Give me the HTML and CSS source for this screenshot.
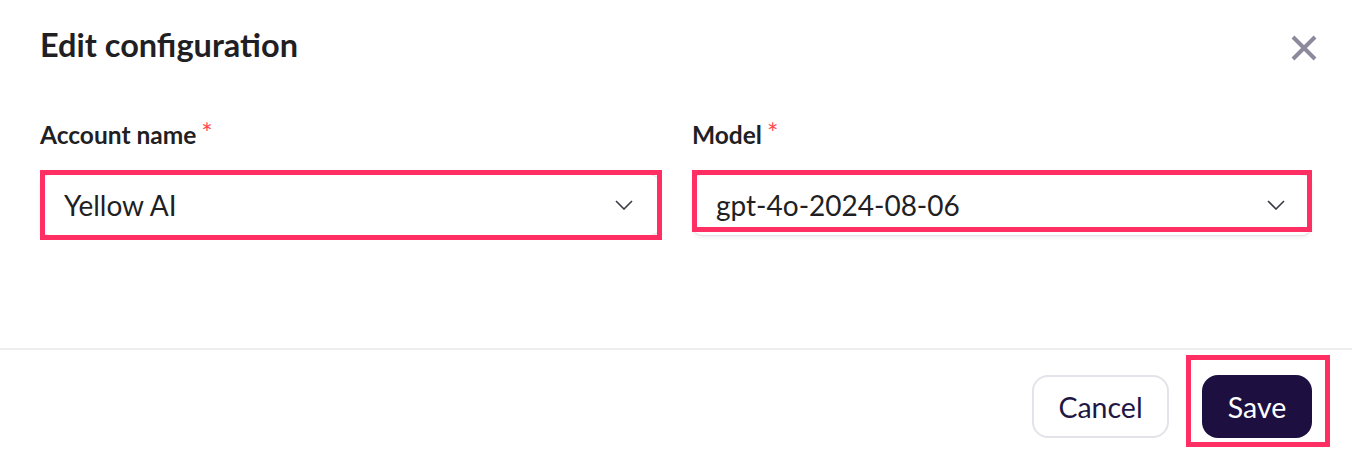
FILE: index.html
```html
<!DOCTYPE html>
<html lang="en">
<head>
<meta charset="utf-8">
<title>Edit configuration</title>
<link rel="stylesheet" href="styles.css">
</head>
<body>
<div class="modal">
  <header class="modal-header">
    <h2 class="modal-title">Edit configuration</h2>
    <button class="close-btn" aria-label="Close">
      <svg width="28" height="28" viewBox="0 0 28 28"><path d="M3 3 L25 25 M25 3 L3 25" stroke="#8c8a9c" stroke-width="4" stroke-linecap="butt" fill="none"/></svg>
    </button>
  </header>
  <div class="modal-body">
    <div class="field">
      <label class="field-label">Account name<span class="req">*</span></label>
      <div class="select annot annot-account">
        <span class="select-value">Yellow AI</span>
        <svg class="chev" width="18" height="10" viewBox="0 0 18 10"><path d="M1 1 L9 9 L17 1" stroke="#3a3a44" stroke-width="1.6" fill="none"/></svg>
      </div>
    </div>
    <div class="field">
      <label class="field-label">Model<span class="req">*</span></label>
      <div class="select annot annot-model">
        <span class="select-value">gpt-4o-2024-08-06</span>
        <svg class="chev" width="18" height="10" viewBox="0 0 18 10"><path d="M1 1 L9 9 L17 1" stroke="#3a3a44" stroke-width="1.6" fill="none"/></svg>
      </div>
    </div>
  </div>
  <footer class="modal-footer">
    <button class="btn btn-cancel">Cancel</button>
    <button class="btn btn-save annot annot-save">Save</button>
  </footer>
</div>
</body>
</html>
```
FILE: styles.css
```css
* { box-sizing: border-box; }
html, body { margin: 0; padding: 0; background: #ffffff; }
body {
  font-family: Lato, "Noto Sans", sans-serif;
  color: #1f1f24;
  width: 1352px;
  height: 454px;
  overflow: hidden;
}
.modal { display: flex; flex-direction: column; }
.modal-header {
  display: flex;
  justify-content: space-between;
  align-items: flex-start;
  padding: 22px 34px 0 40px;
  height: 92px;
}
.modal-title {
  margin: 0;
  font-size: 32.5px;
  font-weight: 700;
  line-height: 46px;
  color: #1f1f24;
}
.close-btn {
  background: none;
  border: 0;
  padding: 0;
  margin-top: 12px;
  width: 28px;
  height: 28px;
  display: flex;
}
.modal-body {
  display: grid;
  grid-template-columns: 1fr 1fr;
  gap: 32px;
  padding: 27px 40px 0 40px;
  height: 256px;
}
.field { display: flex; flex-direction: column; }
.field-label {
  font-size: 24.5px;
  font-weight: 700;
  line-height: 32px;
  color: #1f1f24;
  display: flex;
  align-items: flex-start;
}
.req {
  color: #ff4a4f;
  font-size: 27px;
  line-height: 27px;
  margin-left: 5px;
  font-weight: 400;
}
.select {
  margin-top: 23px;
  height: 62px;
  border: 1px solid #e2e2e8;
  border-radius: 10px;
  box-shadow: 0 2px 4px rgba(0,0,0,0.06);
  display: flex;
  align-items: center;
  justify-content: space-between;
  padding: 0 26px 0 23px;
  background: #fff;
}
.select-value {
  font-size: 28px;
  color: #1f1f24;
}
.chev { display: block; }
.modal-footer {
  border-top: 2px solid #eeeef0;
  display: flex;
  justify-content: flex-end;
  align-items: flex-start;
  gap: 33px;
  padding: 25px 40px 0 40px;
}
.btn {
  font-family: Lato, "Noto Sans", sans-serif;
  font-size: 28.5px;
  height: 63px;
  border-radius: 16px;
  cursor: pointer;
  padding: 0;
}
.btn-cancel {
  background: #fff;
  border: 2px solid #e3e3ea;
  color: #1e1745;
  width: 137px;
}
.btn-save {
  background: #1d1040;
  border: 0;
  color: #fff;
  width: 110px;
}
.annot { position: relative; }
.annot::after {
  content: "";
  position: absolute;
  border: 5px solid #ff2e63;
  pointer-events: none;
}
.annot-account::after { top: -5px; bottom: -5px; left: -1px; right: -3px; }
.annot-model::after { top: -5px; bottom: 3px; left: -1px; right: -1px; }
.annot-save::after { top: -20px; bottom: -9px; left: -16px; right: -18px; }
```
